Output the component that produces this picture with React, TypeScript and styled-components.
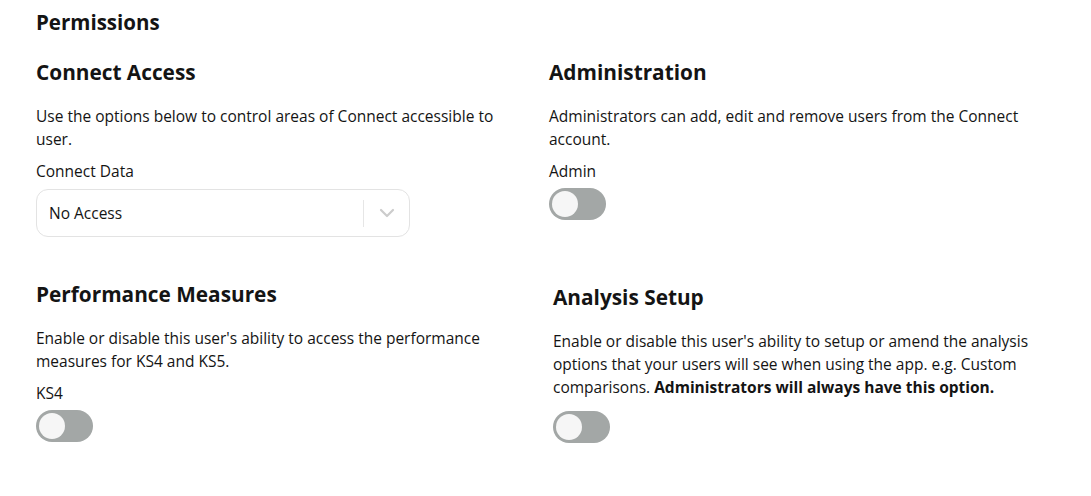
import React from "react";
import styled, { createGlobalStyle } from "styled-components";

const Global = createGlobalStyle`
  html, body { margin: 0; padding: 0; background: #ffffff; }
  body { font-family: "Open Sans", "Noto Sans", sans-serif; color: #141414; }
  * { box-sizing: border-box; }
`;

const Page = styled.div`
  padding: 10px 36px 0 36px;
  width: 1091px;
`;

const Title = styled.h2`
  margin: 0;
  font-size: 20.5px;
  line-height: 24px;
  font-weight: 700;
`;

const Grid = styled.div`
  margin-top: 25px;
  display: grid;
  grid-template-columns: 477px 1fr;
  column-gap: 36px;
  row-gap: 44px;
`;

const Section = styled.section<{ $shift?: number }>`
  display: flex;
  flex-direction: column;
  padding-top: ${(p) => p.$shift ?? 0}px;
  padding-left: ${(p) => (p.$shift ? p.$shift + 1 : 0)}px;
`;

const Heading = styled.h3`
  margin: 0;
  font-size: 20.8px;
  line-height: 26px;
  font-weight: 700;
`;

const Desc = styled.p`
  margin: 20px 0 0 0;
  font-size: 15.5px;
  line-height: 23px;
  font-weight: 400;
  strong { font-weight: 700; }
`;

const Label = styled.div`
  margin-top: 9px;
  font-size: 15.5px;
  line-height: 23px;
`;

const Select = styled.div`
  margin-top: 6px;
  width: 374px;
  height: 48px;
  border: 1px solid #e3e3e3;
  border-radius: 12px;
  display: flex;
  align-items: center;
  padding-left: 12px;
`;

const SelectValue = styled.div`
  flex: 1;
  font-size: 15.5px;
`;

const Separator = styled.div`
  width: 1px;
  height: 27px;
  background: #e6e6e6;
`;

const Chevron = styled.div`
  width: 45px;
  display: flex;
  align-items: center;
  justify-content: center;
  color: #cccccc;
`;

const Track = styled.div<{ $gap: number }>`
  margin-top: ${(p) => p.$gap}px;
  width: 57px;
  height: 32px;
  border-radius: 16px;
  background: #a3a7a6;
  display: flex;
  align-items: center;
  padding-left: 3px;
`;

const Knob = styled.div`
  width: 26px;
  height: 26px;
  border-radius: 50%;
  background: #f6f6f6;
`;

const Toggle = ({ gap }: { gap: number }) => (
  <Track $gap={gap}>
    <Knob />
  </Track>
);

export default function App() {
  return (
    <>
      <Global />
      <Page>
        <Title>Permissions</Title>
        <Grid>
          <Section>
            <Heading>Connect Access</Heading>
            <Desc>Use the options below to control areas of Connect accessible to user.</Desc>
            <Label>Connect Data</Label>
            <Select>
              <SelectValue>No Access</SelectValue>
              <Separator />
              <Chevron>
                <svg width="16" height="10" viewBox="0 0 16 10" fill="none">
                  <path d="M2 2 L8 8 L14 2" stroke="currentColor" strokeWidth="2.2" strokeLinecap="round" strokeLinejoin="round" />
                </svg>
              </Chevron>
            </Select>
          </Section>
          <Section>
            <Heading>Administration</Heading>
            <Desc>Administrators can add, edit and remove users from the Connect account.</Desc>
            <Label>Admin</Label>
            <Toggle gap={5} />
          </Section>
          <Section>
            <Heading>Performance Measures</Heading>
            <Desc>Enable or disable this user's ability to access the performance measures for KS4 and KS5.</Desc>
            <Label>KS4</Label>
            <Toggle gap={5} />
          </Section>
          <Section $shift={3}>
            <Heading>Analysis Setup</Heading>
            <Desc>
              Enable or disable this user's ability to setup or amend the analysis options that your users will see when using the app. e.g. Custom comparisons. <strong>Administrators will always have this option.</strong>
            </Desc>
            <Toggle gap={12} />
          </Section>
        </Grid>
      </Page>
    </>
  );
}
